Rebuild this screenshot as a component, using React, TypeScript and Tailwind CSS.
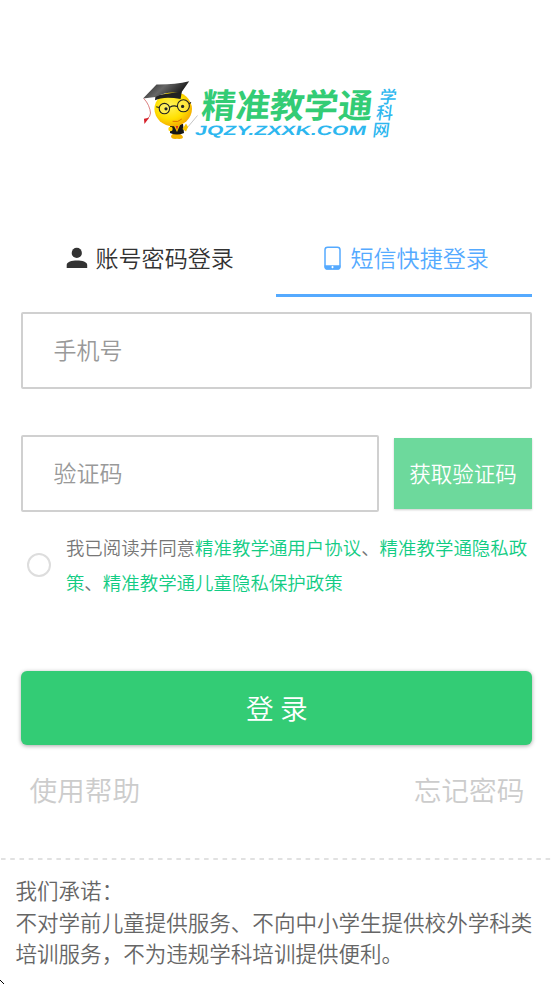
const PersonIcon = () => (
    <svg className="h-[22px] w-[22px]" viewBox="0 0 22 22" fill="#333333">
        <circle cx="10.8" cy="5.9" r="5.1" />
        <path d="M0.7 20.9V17.9C0.7 14.8 5.8 13.5 11 13.5S21.2 14.8 21.2 17.9V20.9Z" />
    </svg>
);

const PhoneIcon = () => (
    <svg className="h-[24px] w-[17px]" viewBox="0 0 17 24">
        <rect x="1" y="1.2" width="15" height="21.8" rx="2.6" fill="none" stroke="#55aaff" strokeWidth="1.5" />
        <path d="M0.6 19.2H16.4V20.5Q16.4 23.4 13.5 23.4H3.5Q0.6 23.4 0.6 20.5Z" fill="#55aaff" />
        <path d="M8.5 19.7L9.8 21.1L8.5 22.5L7.2 21.1Z" fill="#fff" />
    </svg>
);

const Logo = () => (
    <svg className="h-[64px] w-[258px]" viewBox="141 77 258 64">
        <defs>
            <radialGradient id="face" cx="0.42" cy="0.4" r="0.65">
                <stop offset="0" stopColor="#fff25a" />
                <stop offset="0.6" stopColor="#ffe000" />
                <stop offset="1" stopColor="#f3a600" />
            </radialGradient>
            <linearGradient id="cap" x1="0" y1="0" x2="1" y2="0.4">
                <stop offset="0" stopColor="#181818" />
                <stop offset="0.5" stopColor="#666" />
                <stop offset="1" stopColor="#111" />
            </linearGradient>
        </defs>
        {/* mascot */}
        <path d="M171 136Q172 133 176 134Q181 133 183 137Q183 139.5 177 138.8Q171 139.5 171 136Z" fill="#f5b400" />
        <path d="M170 124L183 124L184 133Q177 136 170 133Z" fill="#161616" />
        <path d="M173 124L177 132L180.5 124Z" fill="#f7c800" />
        <path d="M175.7 126L177 130L178.2 126Z" fill="#d22" />
        <circle cx="170.5" cy="129" r="2.2" fill="#ffd400" />
        <ellipse cx="173.2" cy="109" rx="18.8" ry="17.2" fill="url(#face)" />
        <path d="M187 128L197.5 115.5" stroke="#aaa" strokeWidth="0.7" />
        <path d="M182.5 129L186 123.4L188 127L186 131.5Z" fill="#f7c400" />
        <g fill="#fff27a" fillOpacity="0.5" stroke="#222" strokeWidth="1.1">
            <circle cx="164.4" cy="108.6" r="5.2" />
            <circle cx="183.4" cy="105.8" r="6" />
        </g>
        <path d="M169.8 107.2Q173.5 105 177.2 106.4M189 104L191 102.4M159 107.5L156.2 106.8" fill="none" stroke="#222" strokeWidth="1.1" />
        <circle cx="166" cy="108.8" r="1.6" fill="#222" />
        <circle cx="182.6" cy="106.4" r="1.6" fill="#222" />
        <path d="M172.6 121.3Q178 122.8 181.8 119" fill="none" stroke="#d86a00" strokeWidth="0.9" />
        <path d="M155.5 95.5L155 100.2Q164 95.8 180.6 99L181.8 91.5Z" fill="#222" />
        <path d="M143 98.4L156.5 84.4Q174 84.7 189.2 81.2L180.6 93.4Q169 90.5 155.5 97Z" fill="url(#cap)" />
        <path d="M143.8 98.5C148 103 150 108 150.5 113Q150.4 117 146.8 119" fill="none" stroke="#cc4b4b" strokeWidth="0.7" />
        <path d="M144 118.7L149.2 117.8L144.4 124Z" fill="#d6202a" />
        {/* wordmark */}
        <g fontFamily="'Noto Sans CJK SC', sans-serif">
            <text transform="translate(200.5 118.2) skewX(-6)" fontSize="34" fontWeight="700" textLength="171" lengthAdjust="spacingAndGlyphs" fill="#33cc75">精准教学通</text>
            <g fontSize="17" fontWeight="500" fill="#2db7ef">
                <text transform="translate(379 103) skewX(-7)">学</text>
                <text transform="translate(375.5 119) skewX(-7)">科</text>
                <text transform="translate(372 135.5) skewX(-7)">网</text>
            </g>
        </g>
        <text transform="translate(194.5 135) skewX(-12)" fontFamily="'Liberation Sans', sans-serif" fontSize="13.6" fontWeight="700" textLength="171" lengthAdjust="spacingAndGlyphs" fill="#2db7ef">JQZY.ZXXK.COM</text>
    </svg>
);

const Tabs = () => (
    <div className="flex h-[75px] text-[23.07px]">
        <button className="flex flex-1 items-center justify-center gap-[7px] pb-[4px] pl-[3px] text-[#333333]">
            <PersonIcon />
            账号密码登录
        </button>
        <button className="flex flex-1 items-center justify-center gap-[9px] border-b-[3px] border-[#55aaff] pb-px pl-[5px] text-[#55aaff]">
            <PhoneIcon />
            短信快捷登录
        </button>
    </div>
);

const Agreement = () => (
    <div className="mt-[18px] flex h-[70px] items-center">
        <span className="ml-[6px] h-[24px] w-[24px] shrink-0 rounded-full border-2 border-[#dddddd]" />
        <p className="ml-[14.5px] w-[466px] shrink-0 text-[18.47px] leading-[35px] text-[#777777]">
            我已阅读并同意<a className="text-[#12cc84]">精准教学通用户协议</a>、<a className="text-[#12cc84]">精准教学通隐私政策</a>、
            <a className="text-[#12cc84]">精准教学通儿童隐私保护政策</a>
        </p>
    </div>
);

const App = () => {
    return (
        <div className="flex h-[984px] w-[554px] flex-col overflow-hidden bg-white font-['Noto_Sans_CJK_SC',sans-serif] font-[350]">
            <header className="flex h-[222px] pt-[77px] pl-[141px]">
                <Logo />
            </header>

            <main className="mr-[21.6px] ml-[21.4px]">
                <Tabs />
                <input
                    className="mt-[15px] block h-[77px] w-full rounded-[2px] border-2 border-[#d0d0d0] px-[30px] pb-[4px] text-[23px] outline-none placeholder:text-[#999999]"
                    placeholder="手机号"
                />
                <div className="mt-[46px] flex items-center justify-between">
                    <input
                        className="h-[77px] w-[358px] rounded-[2px] border-2 border-[#d0d0d0] px-[30px] pb-[4px] text-[23px] outline-none placeholder:text-[#999999]"
                        placeholder="验证码"
                    />
                    <button className="h-[71px] w-[138.6px] bg-[#6dd99c] text-[21.5px] text-white shadow-[0_1px_2px_rgba(0,0,0,0.2)]">
                        获取验证码
                    </button>
                </div>
                <Agreement />
                <button className="mt-[71px] h-[74px] w-full rounded-[6px] bg-[#33cc75] text-[27.7px] text-white shadow-[0_1px_4px_rgba(0,0,0,0.35)]">
                    登 录
                </button>
                <div className="mt-[24px] flex justify-between px-[8px] text-[27.7px] leading-[40px] text-[#cccccc]">
                    <a>使用帮助</a>
                    <a>忘记密码</a>
                </div>
            </main>

            <svg className="mt-[49px] h-[2px] w-full shrink-0">
                <line x1="1" y1="1" x2="554" y2="1" stroke="#d8d8d8" strokeWidth="1.4" strokeDasharray="4.6 4.63" />
            </svg>
            <footer className="mt-[14px] ml-[15.5px] w-[530px] text-[21.54px] leading-[31.6px] text-[#666666]">
                <p>我们承诺：</p>
                <p>不对学前儿童提供服务、不向中小学生提供校外学科类培训服务，不为违规学科培训提供便利。</p>
            </footer>
            <svg className="mt-auto h-[4px] w-[4px]" viewBox="0 0 4 4" fill="#000" shapeRendering="crispEdges">
                <path d="M0 0H1V1H0ZM1 1H2V2H1ZM2 2H3V3H2ZM3 3H4V4H3Z" />
            </svg>
        </div>
    );
};

export default App;
